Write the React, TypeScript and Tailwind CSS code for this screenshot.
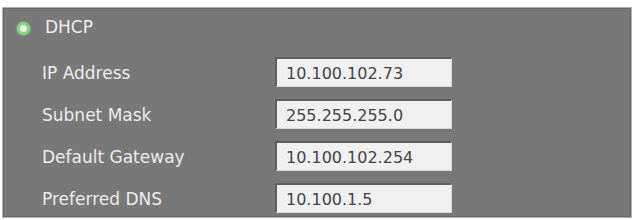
const fields = [
  { label: "IP Address", value: "10.100.102.73" },
  { label: "Subnet Mask", value: "255.255.255.0" },
  { label: "Default Gateway", value: "10.100.102.254" },
  { label: "Preferred DNS", value: "10.100.1.5" },
];

export default function App() {
  return (
    <div className="w-[634px] h-[220px] bg-white pt-[7px] pl-[2px] font-['DejaVu_Sans',sans-serif]">
      <div className="w-[630px] h-[211px] bg-[#787878] border border-[#b4b4b4] shadow-[inset_0_0_0_1px_#666666]">
        <div className="h-[40px] flex items-center pl-[14px] gap-[15px]">
          <span className="w-[13px] h-[13px] rounded-full border-[3px] border-[#7ed67e] bg-[#e6f3e6] shadow-[0_0_2px_#a8e8a8]" />
          <span className="text-[17px] text-[#eeeeee]">DHCP</span>
        </div>
        <div className="mt-[9px] pl-[39px] flex flex-col gap-[12px]">
          {fields.map((f) => (
            <div key={f.label} className="flex items-center">
              <span className="w-[233px] mt-[3px] text-[17px] text-[#ececec]">{f.label}</span>
              <div className="w-[177px] h-[30px] bg-[#f0f0f0] border-t-2 border-l-2 border-[#5e5e5e] border-r border-b border-r-[#d8d8d8] border-b-[#d8d8d8] flex items-center pl-[9px] pt-[2px] text-[16px] text-[#444444]">
                {f.value}
              </div>
            </div>
          ))}
        </div>
      </div>
    </div>
  );
}
